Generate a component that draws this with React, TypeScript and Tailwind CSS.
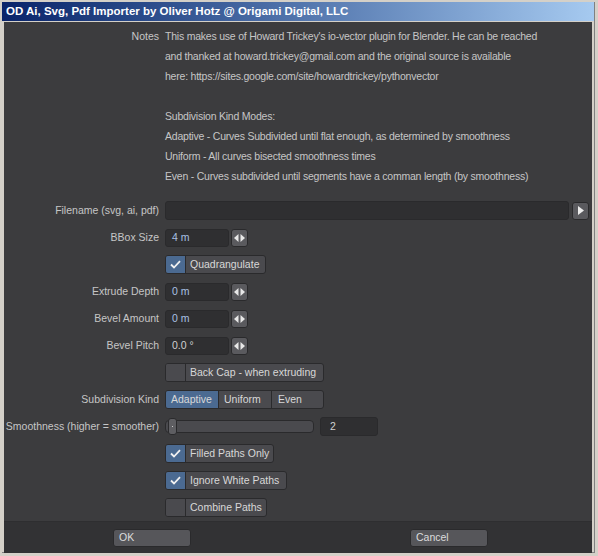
import React from 'react';

const font = { fontFamily: '"Liberation Sans", Arial, sans-serif' };

function Row({ label, children }: { label: string; children?: React.ReactNode }) {
  return (
    <div className="flex h-[27px] items-center">
      <div className="w-[157px] shrink-0 whitespace-nowrap pr-[2px] text-right tracking-normal">{label}</div>
      <div className="ml-[4px] flex flex-1 items-center">{children}</div>
    </div>
  );
}

function Spinner() {
  return (
    <div className="ml-[2px] flex h-[18px] w-[17px] items-center justify-center rounded-[3px] border border-[#2a2a2c] bg-[#5a5a5e]">
      <svg width="11" height="8" viewBox="0 0 11 8">
        <path d="M4.5 0 L0 4 L4.5 8 Z" fill="#e8e8e8" />
        <path d="M6.5 0 L11 4 L6.5 8 Z" fill="#e8e8e8" />
      </svg>
    </div>
  );
}

function NumField({ value, blue }: { value: string; blue?: boolean }) {
  return (
    <div className="flex items-center">
      <div
        className={`flex h-[18px] w-[64px] items-center rounded-[3px] border border-[#2a2a2c] bg-[#2f2f31] pl-[6px] ${
          blue ? 'text-[#a9c1e3]' : 'text-[#d0d0d0]'
        }`}
      >
        {value}
      </div>
      <Spinner />
    </div>
  );
}

function Check({ label, checked, width }: { label: string; checked?: boolean; width: string }) {
  return (
    <div className={`flex h-[19px] items-stretch overflow-hidden rounded-[3px] border border-[#2a2a2c] bg-[#4a4a4e] ${width}`}>
      <div
        className={`flex w-[20px] shrink-0 items-center justify-center border-r border-[#2a2a2c] ${
          checked ? 'bg-[#4b6a91]' : 'bg-[#4a4a4e]'
        }`}
      >
        {checked && (
          <svg width="11" height="9" viewBox="0 0 11 9">
            <path d="M1 4.5 L4 7.5 L10 1.2" stroke="#f0f0f0" strokeWidth="1.8" fill="none" />
          </svg>
        )}
      </div>
      <div className="flex items-center whitespace-nowrap pl-[4px] text-[#d8d8d8]">{label}</div>
    </div>
  );
}

export default function App() {
  const notes = [
    "This makes use of Howard Trickey's io-vector plugin for Blender. He can be reached",
    'and thanked at howard.trickey@gmail.com and the original source is available',
    'here: https://sites.google.com/site/howardtrickey/pythonvector',
    '',
    'Subdivision Kind Modes:',
    'Adaptive - Curves Subdivided until flat enough, as determined by smoothness',
    'Uniform - All curves bisected smoothness times',
    'Even - Curves subdivided until segments have a comman length (by smoothness)',
  ];

  return (
    <div className="h-[556px] w-[598px] border-l border-t border-[#d4d0c8] bg-[#d4d0c8] p-[1px] pb-[3px] pr-[3px]" style={font}>
      <div className="flex h-full flex-col border-r border-b border-[#808080] bg-[#d4d0c8]">
        <div className="flex h-[19px] shrink-0 items-center whitespace-nowrap bg-gradient-to-r from-[#0a246a] to-[#a6caf0] pl-[4px] text-[11.5px] font-bold text-white">
          OD Ai, Svg, Pdf Importer by Oliver Hotz @ Origami Digital, LLC
        </div>
        <div className="mx-[2px] mt-[1px] flex flex-1 flex-col bg-[#3c3c3e] text-[10.5px] text-[#c6c6c6]">
          <div className="flex pt-[4px]">
            <div className="w-[157px] shrink-0 pr-[2px] text-right leading-[20px]">Notes</div>
            <div className="ml-[4px] leading-[20px] tracking-[-0.22px]">
              {notes.map((n, i) => (
                <div key={i} className="h-[20px] whitespace-nowrap">{n}</div>
              ))}
            </div>
          </div>

          <div className="mt-[11px] flex flex-col">
            <Row label="Filename (svg, ai, pdf)">
              <div className="h-[19px] w-[404px] rounded-[3px] border border-[#2a2a2c] bg-[#2f2f31]" />
              <div className="ml-[3px] flex h-[18px] w-[17px] items-center justify-center rounded-[3px] border border-[#2a2a2c] bg-[#5a5a5e]">
                <svg width="6" height="9" viewBox="0 0 6 9">
                  <path d="M0 0 L6 4.5 L0 9 Z" fill="#ececec" />
                </svg>
              </div>
            </Row>
            <Row label="BBox Size">
              <NumField value="4 m" blue />
            </Row>
            <Row label="">
              <Check label="Quadrangulate" checked width="w-[101px]" />
            </Row>
            <Row label="Extrude Depth">
              <NumField value="0 m" blue />
            </Row>
            <Row label="Bevel Amount">
              <NumField value="0 m" blue />
            </Row>
            <Row label="Bevel Pitch">
              <NumField value="0.0 °" />
            </Row>
            <Row label="">
              <Check label="Back Cap - when extruding" width="w-[159px]" />
            </Row>
            <Row label="Subdivision Kind">
              <div className="flex h-[19px] w-[159px] overflow-hidden rounded-[3px] border border-[#2a2a2c] bg-[#4a4a4e] text-[#d8d8d8]">
                <div className="flex w-[52px] items-center bg-[#4b6a91] pl-[5px]">Adaptive</div>
                <div className="flex w-[53px] items-center border-l border-[#2a2a2c] pl-[5px]">Uniform</div>
                <div className="flex flex-1 items-center border-l border-[#2a2a2c] pl-[6px]">Even</div>
              </div>
            </Row>
            <Row label="Smoothness (higher = smoother)">
              <div className="relative h-[13px] w-[149px] rounded-[4px] border border-[#2a2a2c] bg-[#4a4a4e]">
                <div className="absolute left-[2px] top-[-3px] flex h-[17px] w-[9px] items-center justify-center rounded-[3px] border border-[#2a2a2c] bg-[#5e5e62]">
                  <div className="h-[1px] w-[1px] bg-[#cccccc]" />
                </div>
              </div>
              <div className="ml-[6px] flex h-[19px] w-[58px] items-center rounded-[3px] border border-[#2a2a2c] bg-[#2f2f31] pl-[9px] text-[#d0d0d0]">
                2
              </div>
            </Row>
            <Row label="">
              <Check label="Filled Paths Only" checked width="w-[109px]" />
            </Row>
            <Row label="">
              <Check label="Ignore White Paths" checked width="w-[122px]" />
            </Row>
            <Row label="">
              <Check label="Combine Paths" width="w-[102px]" />
            </Row>
          </div>
          <div className="mt-auto flex h-[32px] items-center border-t border-[#2e2e30] bg-[#323234]">
            <div className="ml-[109px] flex h-[18px] w-[78px] items-center rounded-[3px] border border-[#2a2a2c] bg-[#56565a] pl-[5px] text-[#dcdcdc]">
              OK
            </div>
            <div className="ml-[219px] flex h-[18px] w-[78px] items-center rounded-[3px] border border-[#2a2a2c] bg-[#56565a] pl-[5px] text-[#dcdcdc]">
              Cancel
            </div>
          </div>
        </div>
      </div>
    </div>
  );
}
